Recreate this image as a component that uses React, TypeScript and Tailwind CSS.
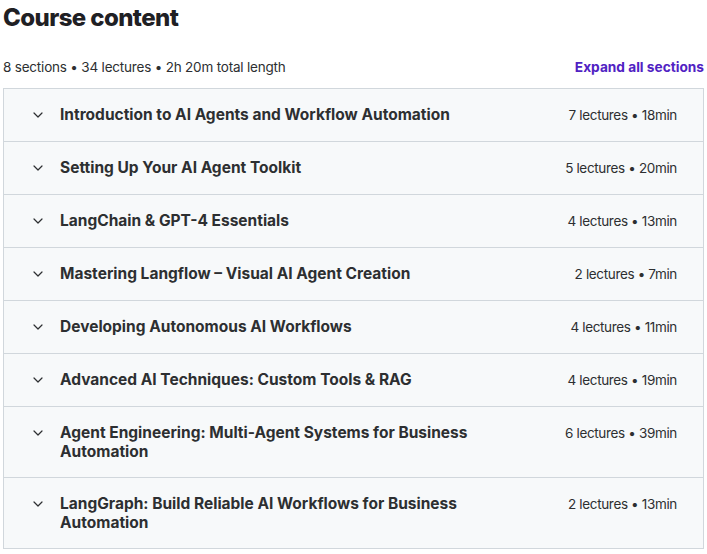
import React from "react";

type Section = {
  title: string;
  lectures: number;
  minutes: number;
};

const sections: Section[] = [
  { title: "Introduction to AI Agents and Workflow Automation", lectures: 7, minutes: 18 },
  { title: "Setting Up Your AI Agent Toolkit", lectures: 5, minutes: 20 },
  { title: "LangChain & GPT-4 Essentials", lectures: 4, minutes: 13 },
  { title: "Mastering Langflow – Visual AI Agent Creation", lectures: 2, minutes: 7 },
  { title: "Developing Autonomous AI Workflows", lectures: 4, minutes: 11 },
  { title: "Advanced AI Techniques: Custom Tools & RAG", lectures: 4, minutes: 19 },
  { title: "Agent Engineering: Multi-Agent Systems for Business Automation", lectures: 6, minutes: 39 },
  { title: "LangGraph: Build Reliable AI Workflows for Business Automation", lectures: 2, minutes: 13 },
];

const Chevron = () => (
  <svg width="10" height="6" viewBox="0 0 10 6" fill="none" className="mt-[7px] shrink-0">
    <path d="M1 1L5 5L9 1" stroke="#2d2f31" strokeWidth="1.2" strokeLinecap="round" strokeLinejoin="round" />
  </svg>
);

const SectionRow: React.FC<{ section: Section }> = ({ section }) => (
  <div className="flex items-start border-t border-[#d1d7dc] bg-[#f7f9fa] py-4 pl-[29px] pr-[26px] first:border-t-0">
    <Chevron />
    <h3 className="ml-[17px] mr-6 max-w-[430px] flex-1 text-[15.5px] font-bold leading-[19px] text-[#2d2f31]">
      {section.title}
    </h3>
    <span className="ml-auto whitespace-nowrap text-[13.5px] leading-[20px] tracking-[-0.35px] text-[#2d2f31]">
      {section.lectures} lectures • {section.minutes}min
    </span>
  </div>
);

const App: React.FC = () => {
  return (
    <div className="min-h-screen bg-white px-[3px] font-['Inter',sans-serif] text-[#2d2f31]">
      <h2 className="pt-[2px] text-[24px] font-extrabold leading-[32px] tracking-[-0.6px] text-[#1f2024]">
        Course content
      </h2>

      <div className="mt-[23px] flex items-center justify-between pb-[11px]">
        <span className="text-[13.5px] leading-[20px] tracking-[-0.2px]">
          8 sections • 34 lectures • 2h 20m total length
        </span>
        <button className="text-[13.7px] font-bold leading-[20px] text-[#5022c3]">Expand all sections</button>
      </div>

      <div className="border border-[#d1d7dc]">
        {sections.map((s) => (
          <SectionRow key={s.title} section={s} />
        ))}
      </div>
    </div>
  );
};

export default App;
